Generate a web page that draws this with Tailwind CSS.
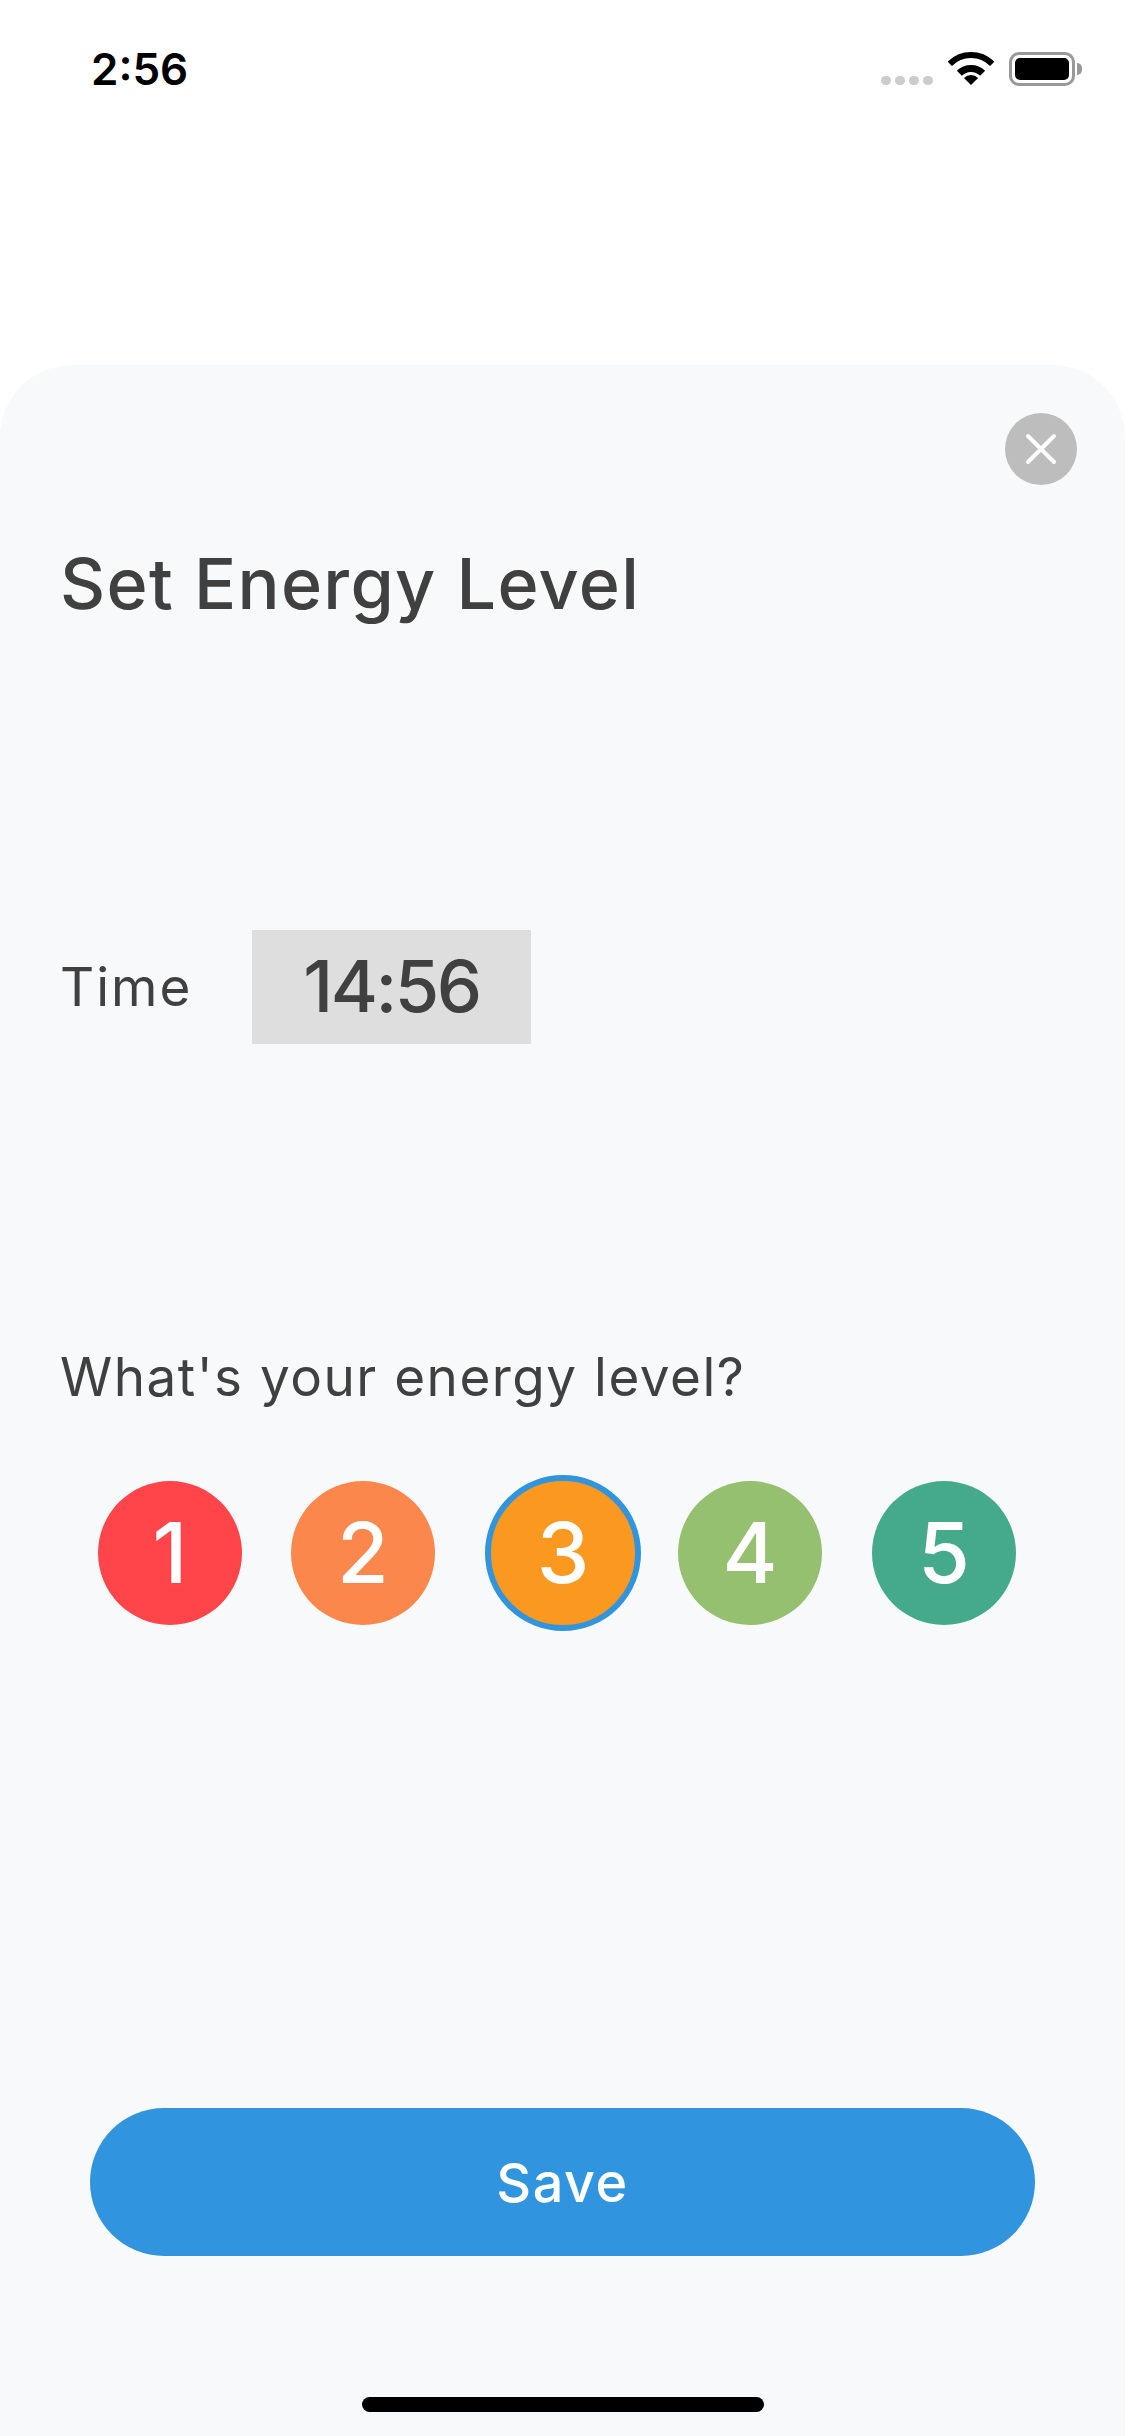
<!DOCTYPE html>
<html lang="en">
<head>
    <meta charset="UTF-8">
    <meta name="viewport" content="width=device-width, initial-scale=1.0">
    <title>Set Energy Level</title>
    <script src="https://cdn.jsdelivr.net/npm/@tailwindcss/browser@4"></script>
</head>
<body class="bg-white font-['Inter',sans-serif] text-[#404040]">
    <div class="w-[1125px] h-[2436px] flex flex-col overflow-hidden">
        <!-- Status bar -->
        <header class="h-[365px] shrink-0 flex items-start justify-between pt-[52px] pl-[91px] pr-[43px]">
            <span class="text-[44px] leading-[34px] font-semibold text-black">2:56</span>
            <div class="flex items-start">
                <div class="flex gap-[4px] mt-[24px] mr-[15px]">
                    <span class="w-[10px] h-[9px] rounded-full bg-[#cccccc]"></span>
                    <span class="w-[10px] h-[9px] rounded-full bg-[#cccccc]"></span>
                    <span class="w-[10px] h-[9px] rounded-full bg-[#cccccc]"></span>
                    <span class="w-[10px] h-[9px] rounded-full bg-[#cccccc]"></span>
                </div>
                <svg class="mr-[15px]" width="46" height="33" viewBox="0 0 46 33" fill="none">
                    <path d="M1.8 11.8A30 30 0 0 1 44.2 11.8" stroke="#000" stroke-width="6"/>
                    <path d="M11.33 21.33A16.5 16.5 0 0 1 34.67 21.33" stroke="#000" stroke-width="7"/>
                    <path d="M23 33L15.93 25.93A10 10 0 0 1 30.07 25.93Z" fill="#000"/>
                </svg>
                <div class="w-[66px] h-[34px] rounded-[10px] border-[3px] border-[#999999] p-[3px]">
                    <div class="w-full h-full rounded-[5px] bg-black"></div>
                </div>
                <span class="w-[5px] h-[12px] mt-[11px] ml-[2px] rounded-r-full bg-[#999999]"></span>
            </div>
        </header>

        <!-- Sheet -->
        <main class="flex-1 flex flex-col bg-[#f8f9fb] rounded-t-[72px] pl-[60px]">
            <button class="self-end mr-[48px] mt-[48px] w-[72px] h-[72px] rounded-full bg-[#bdbdbd] flex items-center justify-center">
                <svg width="32" height="32" viewBox="0 0 32 32" fill="none">
                    <path d="M3 3L29 29M29 3L3 29" stroke="#fff" stroke-width="4" stroke-linecap="round"/>
                </svg>
            </button>

            <h1 class="mt-[49px] h-[100px] leading-[100px] text-[70px] tracking-[1.3px] font-medium">Set Energy Level</h1>

            <div class="mt-[296px] flex items-center">
                <span class="w-[192px] text-[53px] tracking-[2px] leading-[60px] font-normal">Time</span>
                <div class="w-[279px] h-[114px] pb-[3px] bg-[#dedede] flex items-center justify-center text-[72px] tracking-[-2.5px] font-medium">14:56</div>
            </div>

            <p class="mt-[298px] h-[70px] leading-[70px] text-[53px] tracking-[1.5px] font-normal">What's your energy level?</p>

            <div class="mt-[63px] ml-[38px] flex items-center gap-[49px] text-white text-[84px] font-medium">
                <button class="w-[144px] h-[144px] rounded-full bg-[#ff444a] flex items-center justify-center">1</button>
                <button class="w-[144px] h-[144px] rounded-full bg-[#fc874c] flex items-center justify-center">2</button>
                <button class="w-[156px] h-[156px] ml-[1px] -mr-[12px] rounded-full bg-[#fa981f] border-[6px] border-[#3095de] flex items-center justify-center">3</button>
                <button class="w-[144px] h-[144px] rounded-full bg-[#95c06f] flex items-center justify-center">4</button>
                <button class="w-[144px] h-[144px] ml-[1px] rounded-full bg-[#44aa8b] flex items-center justify-center">5</button>
            </div>

            <button class="mt-[477px] ml-[30px] w-[945px] h-[148px] rounded-[74px] bg-[#3095de] text-white text-[54px] tracking-[1.5px] font-medium">Save</button>

            <div class="mt-[141px] ml-[302px] w-[402px] h-[15px] rounded-full bg-black"></div>
        </main>
    </div>
</body>
</html>
